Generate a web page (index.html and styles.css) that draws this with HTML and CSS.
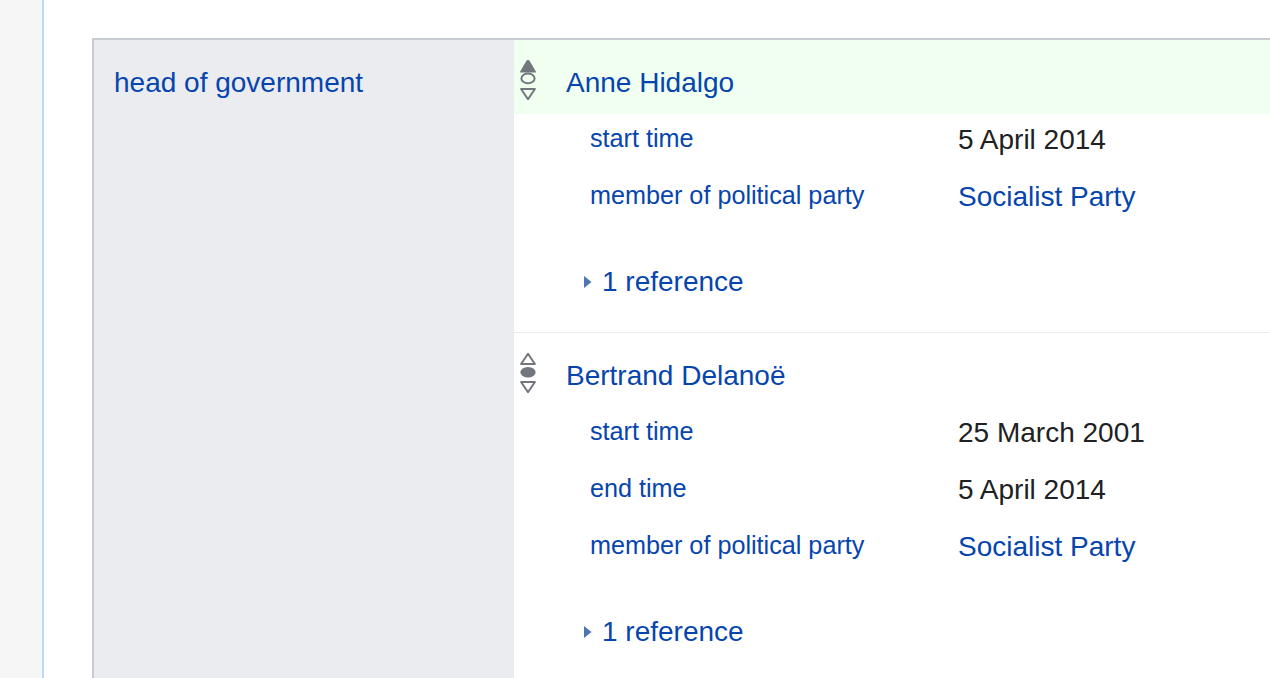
FILE: index.html
```html
<!DOCTYPE html>
<html lang="en">
<head>
<meta charset="utf-8">
<title>head of government</title>
<link rel="stylesheet" href="styles.css">
</head>
<body>
<div class="page">
  <aside class="sidebar"></aside>
  <main class="content">
    <div class="statement-group">
      <div class="property"><a class="link" href="#">head of government</a></div>
      <div class="statements">

        <div class="statement">
          <div class="main-snak highlighted">
            <svg class="rank" viewBox="0 0 16 40" width="16" height="40" aria-hidden="true">
              <path d="M0.6 12 L6.5 1.8 Q8 -0.4 9.5 1.8 L15.4 12 Z" fill="#72777d" stroke="#72777d" stroke-width="1.2" stroke-linejoin="round"/>
              <ellipse cx="8" cy="18.4" rx="6.6" ry="4.8" fill="none" stroke="#72777d" stroke-width="2"/>
              <path d="M1.1 29 L14.9 29 L8 39.2 Z" fill="none" stroke="#72777d" stroke-width="2" stroke-linejoin="round"/>
            </svg>
            <a class="link main-value" href="#">Anne Hidalgo</a>
          </div>
          <div class="qualifiers">
            <div class="qualifier">
              <a class="link qual-prop" href="#">start time</a>
              <span class="qual-value">5 April 2014</span>
            </div>
            <div class="qualifier">
              <a class="link qual-prop" href="#">member of political party</a>
              <a class="link qual-value" href="#">Socialist Party</a>
            </div>
          </div>
          <div class="references">
            <svg class="ref-toggle" viewBox="0 0 9 14" width="9" height="14" aria-hidden="true">
              <path d="M1 1 L8.5 7 L1 13 Z" fill="#4f74b3"/>
            </svg>
            <a class="link" href="#">1 reference</a>
          </div>
        </div>

        <div class="statement separated">
          <div class="main-snak">
            <svg class="rank" viewBox="0 0 16 40" width="16" height="40" aria-hidden="true">
              <path d="M1.1 11 L14.9 11 L8 0.8 Z" fill="none" stroke="#72777d" stroke-width="2" stroke-linejoin="round"/>
              <ellipse cx="8" cy="19.3" rx="7.6" ry="5.2" fill="#72777d"/>
              <path d="M1.1 29 L14.9 29 L8 39.2 Z" fill="none" stroke="#72777d" stroke-width="2" stroke-linejoin="round"/>
            </svg>
            <a class="link main-value" href="#">Bertrand Delanoë</a>
          </div>
          <div class="qualifiers">
            <div class="qualifier">
              <a class="link qual-prop" href="#">start time</a>
              <span class="qual-value">25 March 2001</span>
            </div>
            <div class="qualifier">
              <a class="link qual-prop" href="#">end time</a>
              <span class="qual-value">5 April 2014</span>
            </div>
            <div class="qualifier">
              <a class="link qual-prop" href="#">member of political party</a>
              <a class="link qual-value" href="#">Socialist Party</a>
            </div>
          </div>
          <div class="references">
            <svg class="ref-toggle" viewBox="0 0 9 14" width="9" height="14" aria-hidden="true">
              <path d="M1 1 L8.5 7 L1 13 Z" fill="#4f74b3"/>
            </svg>
            <a class="link" href="#">1 reference</a>
          </div>
        </div>

      </div>
    </div>
  </main>
</div>
</body>
</html>
```

FILE: styles.css
```css
html, body {
  margin: 0;
  padding: 0;
  height: 100%;
  overflow: hidden;
  background: #ffffff;
}

body {
  font-family: "Liberation Sans", Arial, sans-serif;
  color: #202122;
}

.page {
  display: flex;
  width: 1270px;
  height: 678px;
  overflow: hidden;
}

.sidebar {
  flex: 0 0 42px;
  background: #f6f6f6;
  border-right: 2px solid #bcdaf6;
}

.content {
  flex: 1;
  min-width: 0;
  padding: 38px 0 0 48px;
  background: #ffffff;
}

.statement-group {
  display: flex;
  border-top: 2px solid #c8ccd1;
  border-left: 2px solid #c8ccd1;
  min-height: 700px;
}

.link {
  color: #0645ad;
  text-decoration: none;
}

.property {
  flex: 0 0 400px;
  background: #eaecf0;
  padding: 27px 0 0 20px;
  font-size: 28px;
  line-height: 31px;
}

.statements {
  flex: 1;
  min-width: 0;
}

.statement {
  padding-bottom: 35px;
}

.statement.separated {
  border-top: 1px solid #eaecf0;
}

.main-snak {
  display: flex;
  align-items: center;
  height: 74px;
  box-sizing: border-box;
  padding: 20px 0 14px 6px;
  font-size: 28px;
  line-height: 31px;
}

.main-snak.highlighted {
  background: #f0fff0;
}

.rank {
  flex: 0 0 16px;
  display: block;
}

.main-value {
  margin-left: 30px;
  margin-top: 4px;
}

.qualifiers {
  padding-left: 76px;
}

.qualifier {
  display: flex;
  align-items: flex-start;
  height: 57px;
  box-sizing: border-box;
  padding-top: 10px;
}

.qual-prop {
  flex: 0 0 368px;
  font-size: 25.2px;
  line-height: 28px;
}

.qual-value {
  font-size: 28px;
  line-height: 31px;
}

.references {
  display: flex;
  align-items: center;
  margin-top: 38px;
  padding-left: 69px;
  font-size: 28px;
  line-height: 31px;
}

.ref-toggle {
  display: block;
  margin-right: 10px;
}
```
